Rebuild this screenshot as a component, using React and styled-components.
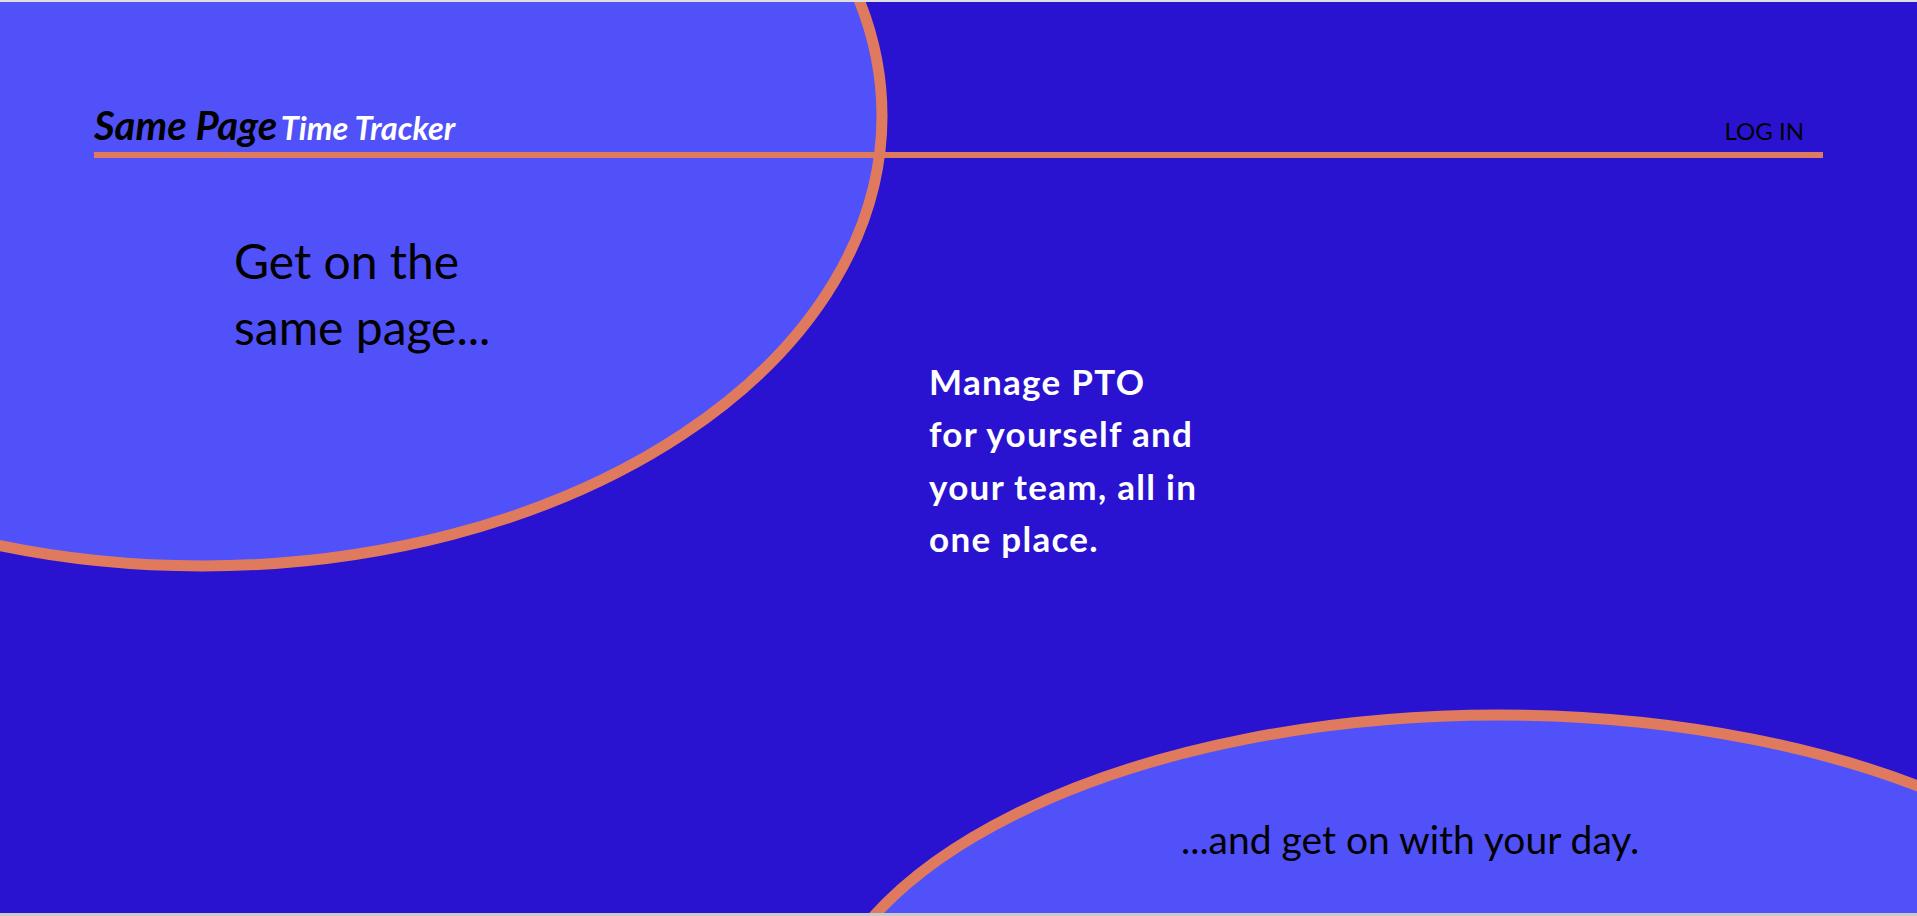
import React from 'react'
import styled, { createGlobalStyle } from 'styled-components'

const INK = '#000'
const NIGHT = '#2a13d0'
const SKY = '#5151f9'
const CLAY = '#e07a5f'

const GlobalStyle = createGlobalStyle`
	html, body {
		margin: 0;
		padding: 0;
		background: #d4d4d4;
	}
	body {
		font-family: Lato, "Open Sans", sans-serif;
	}
`

const Page = styled.div`
	position: relative;
	display: flex;
	flex-direction: column;
	height: 100vh;
	box-sizing: border-box;
	border-top: 2px solid #dedede;
	border-bottom: 3px solid #cacaca;
	background: ${NIGHT};
	overflow: hidden;
`

const Backdrop = styled.svg`
	position: absolute;
	top: 0;
	left: 0;
	width: 100%;
	height: 100%;
	z-index: 0;
`

const Header = styled.header`
	position: relative;
	z-index: 1;
	display: flex;
	align-items: baseline;
	justify-content: space-between;
	margin: 0 94px;
	padding-top: 103px;
	padding-bottom: 7px;
	border-bottom: 6px solid ${CLAY};
`

const Logo = styled.div`
	font-style: italic;
	font-weight: 700;
	line-height: 1;
	white-space: nowrap;
`

const LogoPart = styled.span`
	font-size: ${p => p.$size}px;
	color: ${p => p.$color};
`

const LogIn = styled.a`
	padding-right: 19px;
	font-size: 24px;
	line-height: 1;
	color: ${INK};
	text-decoration: none;
	text-transform: uppercase;
	cursor: pointer;
`

const Main = styled.main`
	position: relative;
	z-index: 1;
	display: flex;
	flex: 1;
	flex-direction: column;
`

const Tagline = styled.h1`
	margin: 70px 0 0;
	padding-left: 234px;
	font-size: 48px;
	font-weight: 400;
	line-height: 66px;
	color: ${INK};
`

const Pitch = styled.p`
	margin: -5px 0 0;
	padding-left: 929px;
	font-size: 35px;
	font-weight: 700;
	letter-spacing: 1.3px;
	line-height: 52.3px;
	color: #fff;
`

const Closer = styled.p`
	margin: auto 0 0;
	padding: 0 0 50px 1181px;
	font-size: 39px;
	font-weight: 400;
	line-height: 1.2;
	color: ${INK};
`

const Line = styled.span`
	display: block;
	white-space: nowrap;
`

export default function App() {
	return (
		<>
			<GlobalStyle />
			<Page>
				<Backdrop aria-hidden="true">
					<ellipse cx="202" cy="114" rx="680" ry="450" fill={SKY} stroke={CLAY} strokeWidth="11" />
					<ellipse cx="1499" cy="1053" rx="685" ry="340" fill={SKY} stroke={CLAY} strokeWidth="11" />
				</Backdrop>
				<Header>
					<Logo>
						<LogoPart $size={40} $color={INK}>Same Page</LogoPart>{' '}
						<LogoPart $size={32.5} $color="#fff">Time Tracker</LogoPart>
					</Logo>
					<LogIn>Log in</LogIn>
				</Header>
				<Main>
					<Tagline>
						<Line>Get on the</Line>
						<Line>same page...</Line>
					</Tagline>
					<Pitch>
						<Line>Manage PTO</Line>
						<Line>for yourself and</Line>
						<Line>your team, all in</Line>
						<Line>one place.</Line>
					</Pitch>
					<Closer>...and get on with your day.</Closer>
				</Main>
			</Page>
		</>
	)
}
